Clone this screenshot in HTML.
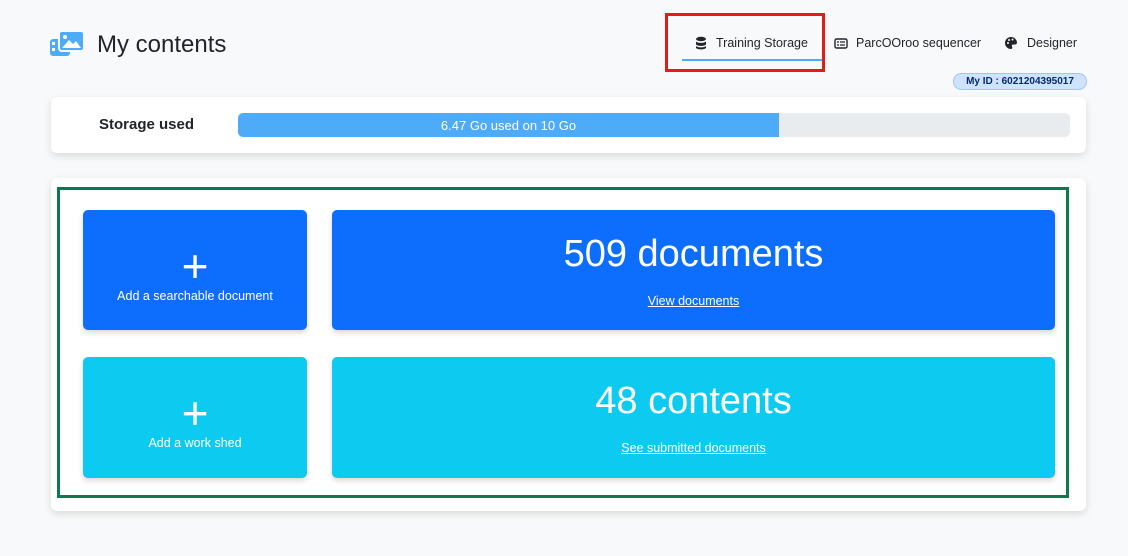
<!DOCTYPE html>
<html><head><style>
*{box-sizing:border-box;margin:0;padding:0}
body{width:1128px;height:556px;background:#f8f9fa;font-family:"Liberation Sans",sans-serif;position:relative;overflow:hidden;color:#212529}
.abs{position:absolute}
.card{background:#fff;border-radius:6px;box-shadow:0 3px 8px rgba(0,0,0,.12)}
.tile{position:absolute;border-radius:5px;color:#fff;text-align:center;box-shadow:0 3px 6px rgba(0,0,0,.15)}
.blue{background:#0d6efd}.cyan{background:#0dcaf0}
.plus{font-size:46px;line-height:40px;font-weight:300}
.nav{position:absolute;top:36px;font-size:12.5px;color:#212529}
a{color:#fff;text-decoration:underline}
</style></head><body>
<svg class="abs" style="left:50px;top:29px" width="34" height="28" viewBox="0 0 34 28">
<rect x="0" y="10" width="20" height="17" rx="3" fill="#4dabf7"/>
<rect x="2" y="13" width="3" height="3" fill="#fff"/><rect x="2" y="19" width="3" height="3" fill="#fff"/>
<rect x="9" y="2" width="25" height="20" rx="3" fill="#4dabf7" stroke="#f8f9fa" stroke-width="2"/>
<path d="M12 19 L19 11 L23 15 L26 12 L31 19Z" fill="#fff"/><circle cx="15" cy="8" r="2" fill="#fff"/>
</svg>
<div class="abs" style="left:97px;top:31px;font-size:24px;color:#212529">My contents</div>

<div class="abs" style="left:665px;top:13px;width:160px;height:59px;border:3px solid #e41b1b"></div>
<div class="abs" style="left:682px;top:59px;width:140px;height:2px;background:#4dabf7"></div>
<svg class="abs" style="left:695px;top:36px" width="12" height="14" viewBox="0 0 12 14"><ellipse cx="6" cy="3" rx="5" ry="2.2" fill="#212529"/><path d="M1 5c0 2.5 10 2.5 10 0v3c0 2.5-10 2.5-10 0z M1 9.5c0 2.5 10 2.5 10 0v2c0 2.5-10 2.5-10 0z" fill="#212529"/></svg>
<div class="nav" style="left:716px">Training Storage</div>
<svg class="abs" style="left:834px;top:38px" width="14" height="11" viewBox="0 0 14 11"><rect x="1" y="1" width="12" height="9" rx="1.5" fill="none" stroke="#212529" stroke-width="1.4"/><path d="M3 4h2M6 4h5M3 7h2M6 7h5" stroke="#212529" stroke-width="1.2"/></svg>
<div class="nav" style="left:856px">ParcOOroo sequencer</div>
<svg class="abs" style="left:1004px;top:36px" width="14" height="14" viewBox="0 0 14 14"><path d="M7 1a6 6 0 1 0 0 12c1.5 0 1.5-1.5 1-2.5s0-2 1.5-2H11a2 2 0 0 0 2-2A6 6 0 0 0 7 1z" fill="#212529"/><circle cx="4" cy="7" r="1" fill="#fff"/><circle cx="5" cy="4" r="1" fill="#fff"/><circle cx="8.5" cy="3.5" r="1" fill="#fff"/></svg>
<div class="nav" style="left:1027px">Designer</div>
<div class="abs" style="left:953px;top:73px;width:134px;height:17px;border-radius:9px;background:#cfe2ff;border:1px solid #9ec5fe;font-size:10px;font-weight:bold;color:#052c65;text-align:center;line-height:15px">My ID : 6021204395017</div>

<div class="card abs" style="left:51px;top:97px;width:1035px;height:56px"></div>
<div class="abs" style="left:99px;top:116px;font-size:15px;font-weight:bold">Storage used</div>
<div class="abs" style="left:238px;top:113px;width:832px;height:24px;background:#e9ecef;border-radius:5px;overflow:hidden">
<div style="width:541px;height:24px;background:#4dabf7;color:#fff;font-size:13px;text-align:center;line-height:25px">6.47 Go used on 10 Go</div></div>

<div class="card abs" style="left:51px;top:178px;width:1035px;height:333px"></div>
<div class="abs" style="left:57px;top:187px;width:1012px;height:311px;border:3px solid #0b7a4e"></div>

<div class="tile blue" style="left:83px;top:210px;width:224px;height:120px"><div class="plus" style="margin-top:36px">+</div><div style="font-size:12.5px;margin-top:3px">Add a searchable document</div></div>
<div class="tile blue" style="left:332px;top:210px;width:723px;height:120px"><div style="font-size:38px;margin-top:23px">509 documents</div><div style="font-size:12.5px;margin-top:18px"><a>View documents</a></div></div>
<div class="tile cyan" style="left:83px;top:357px;width:224px;height:121px"><div class="plus" style="margin-top:36px">+</div><div style="font-size:12.5px;margin-top:3px">Add a work shed</div></div>
<div class="tile cyan" style="left:332px;top:357px;width:723px;height:121px"><div style="font-size:38px;margin-top:23px">48 contents</div><div style="font-size:12.5px;margin-top:18px"><a>See submitted documents</a></div></div>
</body></html>
